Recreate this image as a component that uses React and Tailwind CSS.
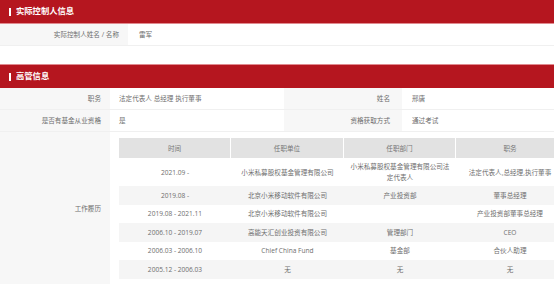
import React from "react";

function Header({ title, top }) {
  return (
    <div
      className={
        "h-[24px] bg-[#b5161f] flex items-center pl-[9px] gap-[5px] " +
        (top ? "border-t border-[#e08a8f]" : "border-b border-[#e08a8f]")
      }
    >
      <span className="w-[2px] h-[8px] bg-white" />
      <span className="text-white font-bold text-[8.3px] leading-none">{title}</span>
    </div>
  );
}

const rows = [
  ["2021.09 -", "小米私募股权基金管理有限公司", "小米私募股权基金管理有限公司法定代表人", "法定代表人,总经理,执行董事"],
  ["2019.08 -", "北京小米移动软件有限公司", "产业投资部", "董事总经理"],
  ["2019.08 - 2021.11", "北京小米移动软件有限公司", "", "产业投资部董事总经理"],
  ["2006.10 - 2019.07", "高能天汇创业投资有限公司", "管理部门", "CEO"],
  ["2006.03 - 2006.10", "Chief China Fund", "基金部", "合伙人助理"],
  ["2005.12 - 2006.03", "无", "无", "无"],
];

export default function App() {
  return (
    <div className="w-[554px] h-[284px] overflow-hidden bg-white text-[#6e6e6e] text-[6.6px] leading-[11px] font-['Open_Sans','Noto_Sans_CJK_SC',sans-serif]">
      <Header title="实际控制人信息" />
      <div className="flex h-[22px] border-b border-[#f0f0f0]">
        <div className="w-[128px] shrink-0 bg-[#f7f7f7] flex items-center justify-end pr-[9px]">
          实际控制人姓名 / 名称
        </div>
        <div className="flex items-center pl-[11px]">雷军</div>
      </div>
      <div className="h-[18px]" />
      <Header title="高管信息" top />
      <div className="flex h-[22px] border-b border-[#f0f0f0]">
        <div className="w-[110px] shrink-0 bg-[#f7f7f7] flex items-center justify-end pr-[9px]">职务</div>
        <div className="w-[174px] shrink-0 flex items-center pl-[9px]">法定代表人 总经理 执行董事</div>
        <div className="w-[118px] shrink-0 bg-[#f7f7f7] flex items-center justify-end pr-[12px]">姓名</div>
        <div className="flex items-center pl-[10px]">邢唐</div>
      </div>
      <div className="flex h-[22px] border-b border-[#f0f0f0]">
        <div className="w-[110px] shrink-0 bg-[#f7f7f7] flex items-center justify-end pr-[9px]">是否有基金从业资格</div>
        <div className="w-[174px] shrink-0 flex items-center pl-[9px]">是</div>
        <div className="w-[118px] shrink-0 bg-[#f7f7f7] flex items-center justify-end pr-[12px]">资格获取方式</div>
        <div className="flex items-center pl-[10px]">通过考试</div>
      </div>
      <div className="flex h-[152px]">
        <div className="w-[110px] shrink-0 bg-[#f7f7f7] flex items-center justify-end pr-[9px]">工作履历</div>
        <div className="pl-[9px] pt-[6px]">
          <div className="w-[445px]">
            <div className="grid grid-cols-[112px_113px_112px_108px] h-[20px] bg-[#e2e2e2] text-[#777]">
              <div className="flex items-center justify-center border-r border-white">时间</div>
              <div className="flex items-center justify-center border-r border-white">任职单位</div>
              <div className="flex items-center justify-center border-r border-white">任职部门</div>
              <div className="flex items-center justify-center">职务</div>
            </div>
            {rows.map((r, i) => (
              <div
                key={i}
                className={
                  "grid grid-cols-[112px_113px_112px_108px] " +
                  (i % 2 === 1 ? "bg-[#f5f5f5]" : "bg-white")
                }
              >
                {r.map((c, j) => (
                  <div key={j} className="flex items-center justify-center text-center px-[4px] py-[3px] min-h-[18.5px]">
                    {i === 0 && j === 3 ? (
                      <span className="whitespace-nowrap">{c}</span>
                    ) : (
                      c
                    )}
                  </div>
                ))}
              </div>
            ))}
          </div>
        </div>
      </div>
    </div>
  );
}
